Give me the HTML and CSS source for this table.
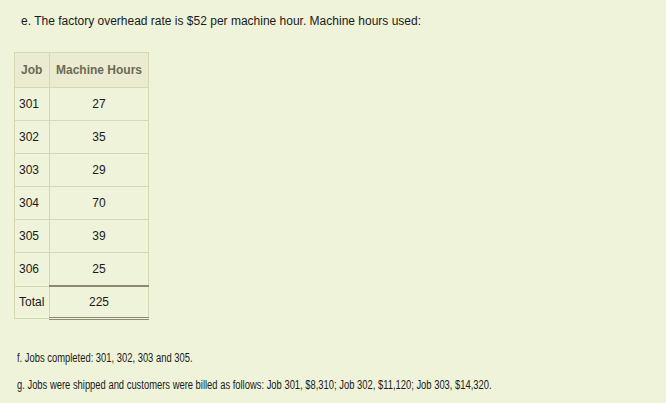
FILE: index.html
```html
<!DOCTYPE html>
<html>
<head>
<meta charset="utf-8">
<link rel="stylesheet" href="styles.css">
</head>
<body>
<p class="intro">e. The factory overhead rate is $52 per machine hour. Machine hours used:</p>
<table class="hours">
  <colgroup><col class="c-job"><col class="c-mh"></colgroup>
  <thead>
    <tr><th class="job">Job</th><th class="mh">Machine Hours</th></tr>
  </thead>
  <tbody>
    <tr><td class="job">301</td><td class="mh">27</td></tr>
    <tr><td class="job">302</td><td class="mh">35</td></tr>
    <tr><td class="job">303</td><td class="mh">29</td></tr>
    <tr><td class="job">304</td><td class="mh">70</td></tr>
    <tr><td class="job">305</td><td class="mh">39</td></tr>
    <tr><td class="job">306</td><td class="mh">25</td></tr>
    <tr class="total"><td class="job">Total</td><td class="mh sum">225</td></tr>
  </tbody>
</table>
<p class="note note-f">f. Jobs completed: 301, 302, 303 and 305.</p>
<p class="note note-g">g. Jobs were shipped and customers were billed as follows: Job 301, $8,310; Job 302, $11,120; Job 303, $14,320.</p>
</body>
</html>
```
FILE: styles.css
```css
html, body {
  margin: 0;
  padding: 0;
  background: #eff3d9;
}
body {
  font-family: "Liberation Sans", Arial, sans-serif;
  font-size: 12px;
  color: #1a1a1a;
}
.intro {
  margin: 0;
  padding: 14px 0 0 21px;
  line-height: 14px;
}
.hours {
  margin: 24px 0 0 14px;
  border-collapse: collapse;
  border: 1px solid #d7d8b3;
  table-layout: fixed;
  width: 134px;
}
.c-job { width: 35px; }
.c-mh { width: 99px; }
.hours th, .hours td {
  border: 1px solid #d7d8b3;
  padding: 0;
  line-height: 14px;
  white-space: nowrap;
}
.hours th {
  background: #ebebd2;
  color: #6b6a52;
  font-weight: bold;
  height: 34px;
}
.hours td {
  height: 32px;
}
.hours .total td {
  height: 30px;
}
.hours .job {
  text-align: left;
  padding-left: 4px;
}
.hours th.job {
  padding-left: 6px;
}
.hours .mh {
  text-align: center;
}
.hours td.sum {
  border-top: 2px solid #8c8872;
  border-bottom: 3px double #8c8872;
}
.note {
  margin: 0;
  padding-left: 17px;
  line-height: 14px;
  font-size: 12px;
  white-space: nowrap;
  transform: scaleX(0.783);
  transform-origin: 17px 0;
}
.note-f {
  padding-top: 31px;
}
.note-g {
  padding-top: 13px;
}
```
